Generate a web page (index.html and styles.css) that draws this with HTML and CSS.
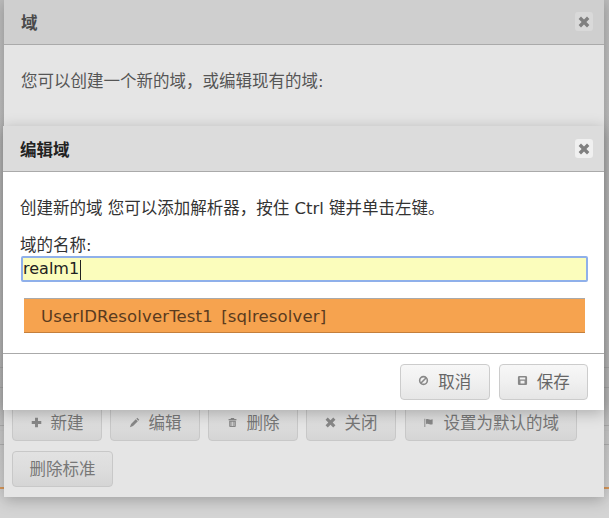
FILE: index.html
```html
<!DOCTYPE html>
<html>
  <head>
    <title>编辑域</title>
    <link rel="stylesheet" href="styles.css">
  </head>
  <body>
    <div class="page-line line-a"></div>
    <div class="page-line line-b"></div>
    <div class="page-line line-c"></div>
    <div class="page-line line-d"></div>
    <div class="page-line line-e"></div>
    <div class="page-line line-orange"></div>

    <div class="dialog dialog-back">
      <div class="dialog-header">
        <h3>域</h3>
        <span class="close-btn">
          <svg viewBox="0 0 12 12" class="icon"><use href="#i-close"></use></svg>
        </span>
      </div>
      <div class="dialog-body">
        <p class="intro">您可以创建一个新的域，或编辑现有的域:</p>
      </div>
      <div class="dialog-footer">
        <button class="btn" type="button"><svg viewBox="0 0 12 12" class="icon"><use href="#i-plus"></use></svg>新建</button>
        <button class="btn" type="button"><svg viewBox="0 0 12 12" class="icon"><use href="#i-pencil"></use></svg>编辑</button>
        <button class="btn" type="button"><svg viewBox="0 0 12 12" class="icon"><use href="#i-trash"></use></svg>删除</button>
        <button class="btn" type="button"><svg viewBox="0 0 12 12" class="icon"><use href="#i-close"></use></svg>关闭</button>
        <button class="btn btn-wide" type="button"><svg viewBox="0 0 12 12" class="icon"><use href="#i-flag"></use></svg>设置为默认的域</button>
        <button class="btn btn-plain" type="button">删除标准</button>
      </div>
    </div>

    <div class="dialog dialog-front">
      <div class="dialog-header">
        <h3>编辑域</h3>
        <span class="close-btn">
          <svg viewBox="0 0 12 12" class="icon"><use href="#i-close"></use></svg>
        </span>
      </div>
      <div class="dialog-body">
        <p class="hint">创建新的域 您可以添加解析器，按住 Ctrl 键并单击左键。</p>
        <label class="field-label">域的名称:</label>
        <div class="field">realm1<span class="caret"></span></div>
        <div class="resolver">UserIDResolverTest1 [sqlresolver]</div>
      </div>
      <div class="dialog-footer">
        <button class="btn" type="button">
          <svg viewBox="0 0 12 12" class="icon">
            <circle class="ban-ring" cx="6" cy="6" r="4.2"></circle>
            <path class="ban-slash" d="M3 9 9 3"></path>
          </svg>取消</button>
        <button class="btn" type="button"><svg viewBox="0 0 12 12" class="icon"><use href="#i-save"></use></svg>保存</button>
      </div>
    </div>

    <svg class="icon-defs" width="0" height="0">
      <defs>
        <path id="i-close" d="M3 .6 6 3.600 9 .6 11.400 3 8.400 6 11.400 9 9 11.400 6 8.400 3 11.400 .6 9 3.600 6 .6 3z"></path>
        <path id="i-plus" d="M4.400 .8h3.200v3.600h3.600v3.200H7.600v3.600H4.400V7.600H.8V4.400h3.600z"></path>
        <path id="i-pencil" d="M9 .8 11.200 3 10.200 4 8 1.800zM7.400 2.400l2.200 2.200-5.200 5.200-3.400 1.400 1.200-3.600z"></path>
        <path id="i-trash" fill-rule="evenodd" d="M4.400 1.200h3.200l.5 1h2.200v1.300H1.700V2.200h2.200zM2.400 4.200h7.200v5.600c0 .8-.6 1.200-1.200 1.200H3.600c-.6 0-1.200-.4-1.200-1.200zM4 5.200v4.600h.9V5.200zM5.600 5.200v4.600h.9V5.200zM7.200 5.200v4.600h.9V5.200z"></path>
        <path id="i-flag" d="M1.500 2h1v9h-1zM3.300 2.500c1.500-.7 2.700-.2 3.800.2 1 .4 2 .4 3.400-.2v5.300c-1.400.6-2.400.6-3.400.2-1.100-.4-2.300-.9-3.800-.2z"></path>
        <path id="i-save" fill-rule="evenodd" d="M2.500 1h7c.8 0 1.500.7 1.500 1.500v7c0 .8-.7 1.500-1.500 1.500h-7C1.700 11 1 10.300 1 9.500v-7C1 1.700 1.700 1 2.500 1zM3 2.800v2h6v-2zM3.800 6.400v3h4.400v-3z"></path>
      </defs>
    </svg>
  </body>
</html>
```

FILE: styles.css
```css
html,
body {
  height: 100%;
}

body {
  margin: 0;
  overflow: hidden;
  position: relative;
  font-family: "DejaVu Sans", "Noto Sans CJK SC", sans-serif;
  font-size: 16.5px;
  color: #333;
  background: linear-gradient(to bottom, #bdbdbd 0, #c2c2c2 400px, #d4d4d4 500px);
}

.page-line {
  position: absolute;
  left: 0;
  right: 0;
  height: 1px;
  background-color: #b0b0b0;
}

.line-a {
  top: 367px;
}

.line-b {
  top: 387px;
}

.line-c {
  top: 425px;
}

.line-d {
  top: 430px;
  background-color: #c4c4c4;
}

.line-e {
  top: 444px;
}

.line-orange {
  top: 487px;
  height: 2px;
  background-color: #d9985a;
}

.icon-defs {
  position: absolute;
}

.dialog {
  position: absolute;
  box-shadow: 0 3px 14px rgba(0, 0, 0, 0.25);
}

.dialog-back {
  left: 4px;
  top: -1px;
  width: 600px;
  height: 498px;
  background-color: #e5e5e5;
  color: #555;
}

.dialog-front {
  left: 3px;
  top: 126px;
  width: 601px;
  height: 284px;
  background-color: #fff;
}

.dialog-header {
  display: flex;
  align-items: center;
  justify-content: space-between;
  box-sizing: border-box;
  padding: 0 11px 0 17px;
  height: 46px;
  border-bottom: 1px solid #aaa;
  background-color: #dcdcdc;
}

.dialog-back .dialog-header {
  background-color: #cfcfcf;
}

h3 {
  margin: 0;
  font-size: 16.5px;
  font-weight: bold;
  color: #222;
}

.dialog-back h3 {
  color: #4a4a4a;
}

.close-btn {
  display: flex;
  align-items: center;
  justify-content: center;
  width: 18px;
  height: 19px;
  border-radius: 3px;
  background-color: #f0f0f0;
  color: #808080;
}

.dialog-back .close-btn {
  background-color: #d9d9d9;
}

.icon {
  display: block;
  width: 12px;
  height: 12px;
  fill: currentColor;
}

.ban-ring,
.ban-slash {
  fill: none;
  stroke: currentColor;
  stroke-width: 1.7;
}

.dialog-body {
  padding: 0 16px 0 17px;
}

.intro {
  margin: 26px 0 0;
  line-height: 22px;
}

.hint {
  margin: 0;
  padding-top: 26px;
  line-height: 22px;
}

.field-label {
  display: block;
  margin-top: 16px;
  line-height: 20px;
}

.field {
  box-sizing: border-box;
  height: 26px;
  margin: 0 0 0 1px;
  width: 567px;
  line-height: 22px;
  font-size: 16px;
  color: #222;
  background-color: #fbfdbc;
  border: 2px solid #8fb0ea;
  border-radius: 2px;
}

.caret {
  display: inline-block;
  width: 1px;
  height: 20px;
  margin-left: 1px;
  vertical-align: middle;
  background-color: #222;
}

.resolver {
  box-sizing: border-box;
  height: 35px;
  margin: 16px 0 0 4px;
  width: 561px;
  padding-left: 17px;
  line-height: 35px;
  letter-spacing: 0.15px;
  word-spacing: 3px;
  color: #5a3b1e;
  background-color: #f6a34f;
  border-top: 1px solid #aaa;
  border-bottom: 1px solid #c47f3c;
}

.dialog-footer {
  display: flex;
  flex-wrap: wrap;
  box-sizing: border-box;
}

.dialog-front .dialog-footer {
  position: absolute;
  left: 0;
  right: 0;
  top: 227px;
  justify-content: flex-end;
  gap: 9px;
  padding: 10px 16px 0 0;
  border-top: 1px solid #aaa;
}

.dialog-back .dialog-footer {
  position: absolute;
  left: 8px;
  right: 0;
  top: 406px;
  gap: 10px 8px;
}

.btn {
  display: flex;
  align-items: center;
  justify-content: center;
  gap: 9px;
  box-sizing: border-box;
  height: 36px;
  min-width: 90px;
  padding: 0 16.5px 3px;
  font: inherit;
  color: #666;
  border: 1px solid #ccc;
  border-radius: 4px;
  background: linear-gradient(to bottom, #f7f7f7 0, #f0f0f0 50%, #e6e6e6 100%);
}

.dialog-front .btn {
  min-width: 89.5px;
}

.dialog-back .btn {
  padding-bottom: 2px;
  color: #777;
  border-color: #c8c8c8;
  background: linear-gradient(to bottom, #e2e2e2 0, #dddddd 50%, #d5d5d5 100%);
}

.dialog-back .btn-wide {
  margin-left: 1px;
  gap: 10px;
}

.btn .icon {
  width: 11px;
  height: 11px;
  color: #888;
}
```
